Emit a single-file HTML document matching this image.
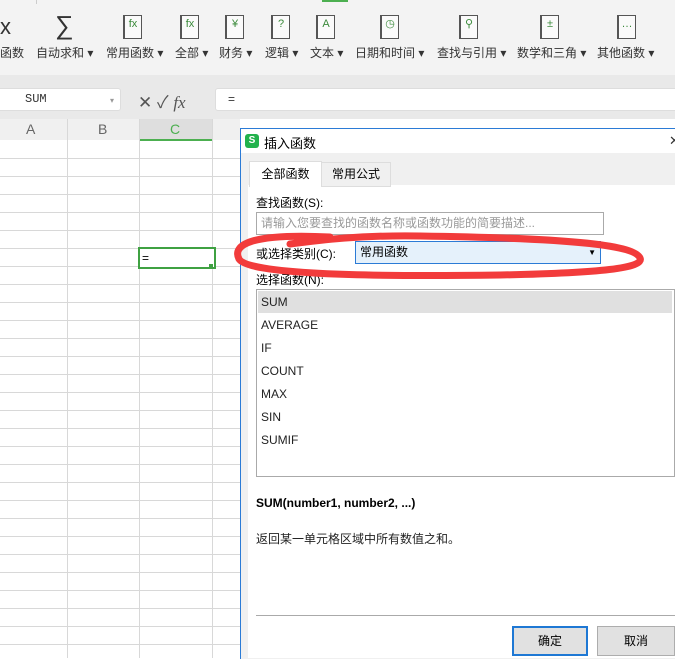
<html><head><style>
body{margin:0;width:675px;height:658px;overflow:hidden;background:#fff;font-family:"Liberation Sans","Noto Sans CJK SC",sans-serif;position:relative;font-size:12px;color:#333}
.a{position:absolute}
.lbl{position:absolute;top:44px;font-size:12px;color:#333;white-space:nowrap}
.ic{position:absolute;top:15px;width:16px;height:22px;border:1px solid #555;border-left:2px solid #555;font-size:11px;color:#3a8a3a;text-align:center;line-height:16px;background:#fafafa}
.hl{position:absolute;left:0;width:240px;height:1px;background:#d8d8d8}
.vl{position:absolute;top:119px;width:1px;height:539px;background:#d8d8d8}
.it{position:absolute;left:261px;font-size:12px;color:#222}
</style></head><body>
<div class="a" style="left:0;top:0;width:675px;height:75px;background:#f3f3f3"></div>
<div class="a" style="left:0;top:75px;width:675px;height:44px;background:#e9e9e9"></div>
<div class="a" style="left:322px;top:0;width:26px;height:2px;background:#4caf50"></div>
<div class="a" style="left:36px;top:0;width:1px;height:4px;background:#ccc"></div>
<div class="a" style="left:0;top:14px;font-size:22px;color:#333">x</div>
<div class="a" style="left:55px;top:10px;font-size:26px;color:#333">∑</div>
<div class="ic" style="left:123px">fx</div><div class="ic" style="left:180px">fx</div><div class="ic" style="left:225px">¥</div>
<div class="ic" style="left:271px">?</div><div class="ic" style="left:316px">A</div><div class="ic" style="left:380px">◷</div>
<div class="ic" style="left:459px">⚲</div><div class="ic" style="left:540px">±</div><div class="ic" style="left:617px">…</div>
<div class="lbl" style="left:0">函数</div><div class="lbl" style="left:36px">自动求和 ▾</div><div class="lbl" style="left:106px">常用函数 ▾</div>
<div class="lbl" style="left:175px">全部 ▾</div><div class="lbl" style="left:219px">财务 ▾</div><div class="lbl" style="left:265px">逻辑 ▾</div>
<div class="lbl" style="left:310px">文本 ▾</div><div class="lbl" style="left:355px">日期和时间 ▾</div><div class="lbl" style="left:437px">查找与引用 ▾</div>
<div class="lbl" style="left:517px">数学和三角 ▾</div><div class="lbl" style="left:597px">其他函数 ▾</div>
<div class="a" style="left:-4px;top:88px;width:95px;height:21px;background:#fff;border:1px solid #ddd;border-radius:3px;font-family:'Liberation Mono',monospace;padding-left:28px;line-height:21px">SUM</div>
<div class="a" style="left:110px;top:96px;font-size:8px;color:#999">▾</div>
<div class="a" style="left:138px;top:88px;font-size:17px;color:#555">✕ ✓ <i style="font-family:'Liberation Serif'">fx</i></div>
<div class="a" style="left:215px;top:88px;width:470px;height:21px;background:#fff;border:1px solid #ddd;border-radius:3px;line-height:21px;padding-left:12px">=</div>
<div class="a" style="left:0;top:119px;width:240px;height:21px;background:#f0f0f0"></div>
<div class="a" style="left:139px;top:119px;width:73px;height:20px;background:#dedede;border-bottom:2px solid #4caf50"></div>
<div class="a" style="left:26px;top:121px;font-size:14px;color:#666">A</div><div class="a" style="left:98px;top:121px;font-size:14px;color:#666">B</div><div class="a" style="left:170px;top:121px;font-size:14px;color:#4caf50">C</div>
<div class="vl" style="left:67px"></div><div class="vl" style="left:139px"></div><div class="vl" style="left:212px"></div>
<div class="hl" style="top:158px"></div><div class="hl" style="top:176px"></div><div class="hl" style="top:194px"></div><div class="hl" style="top:212px"></div><div class="hl" style="top:230px"></div><div class="hl" style="top:248px"></div><div class="hl" style="top:266px"></div><div class="hl" style="top:284px"></div><div class="hl" style="top:302px"></div><div class="hl" style="top:320px"></div><div class="hl" style="top:338px"></div><div class="hl" style="top:356px"></div><div class="hl" style="top:374px"></div><div class="hl" style="top:392px"></div><div class="hl" style="top:410px"></div><div class="hl" style="top:428px"></div><div class="hl" style="top:446px"></div><div class="hl" style="top:464px"></div><div class="hl" style="top:482px"></div><div class="hl" style="top:500px"></div><div class="hl" style="top:518px"></div><div class="hl" style="top:536px"></div><div class="hl" style="top:554px"></div><div class="hl" style="top:572px"></div><div class="hl" style="top:590px"></div><div class="hl" style="top:608px"></div><div class="hl" style="top:626px"></div><div class="hl" style="top:644px"></div>
<div class="a" style="left:138px;top:247px;width:72px;height:18px;border:2px solid #3fa142;background:#fff;line-height:18px;padding-left:2px;color:#000">=</div>
<div class="a" style="left:209px;top:264px;width:4px;height:4px;background:#3fa142"></div>
<div class="a" style="left:240px;top:128px;width:435px;height:530px;background:#f0f0f0;border-left:1px solid #2b7bd6;border-top:1px solid #2b7bd6"></div>
<div class="a" style="left:241px;top:129px;width:434px;height:24px;background:#fff"></div>
<div class="a" style="left:245px;top:134px;width:14px;height:14px;background:#22b24c;border-radius:3px;color:#fff;font-size:10px;text-align:center;line-height:14px;font-weight:bold">S</div>
<div class="a" style="left:264px;top:133px;font-size:13px;color:#000">插入函数</div>
<div class="a" style="left:669px;top:133px;font-size:13px">✕</div>
<div class="a" style="left:248px;top:185px;width:427px;height:473px;background:#fff"></div>
<div class="a" style="left:249px;top:161px;width:71px;height:25px;background:#fff;border:1px solid #ddd;border-bottom:none;text-align:center;line-height:25px;color:#000">全部函数</div>
<div class="a" style="left:321px;top:162px;width:68px;height:23px;background:#f0f0f0;border:1px solid #ddd;text-align:center;line-height:23px;color:#000">常用公式</div>
<div class="a" style="left:256px;top:194px;color:#000">查找函数(S):</div>
<div class="a" style="left:256px;top:212px;width:342px;height:21px;border:1px solid #aaa;color:#999;line-height:21px;padding-left:4px">请输入您要查找的函数名称或函数功能的简要描述...</div>
<div class="a" style="left:256px;top:245px;color:#000">或选择类别(C):</div>
<div class="a" style="left:355px;top:241px;width:240px;height:21px;border:1px solid #2b7bd6;background:#e5f1fb;line-height:21px;padding-left:4px;color:#000">常用函数<span style="position:absolute;right:4px;font-size:8px">▼</span></div>
<div class="a" style="left:256px;top:271px;color:#000">选择函数(N):</div>
<svg class="a" style="left:0;top:0" width="675" height="658"><path d="M330 237 C250 233,232 245,239 259 C248 274,360 277,500 275 C600 273,645 268,640 258 C634 244,560 238,420 236 C360 235,320 240,290 244" fill="none" stroke="#f23b3b" stroke-width="7" stroke-linecap="round"/></svg>
<div class="a" style="left:256px;top:289px;width:417px;height:186px;border:1px solid #aaa;background:#fff"></div>
<div class="a" style="left:258px;top:291px;width:414px;height:22px;background:#e0e0e0"></div>
<div class="it" style="top:295px">SUM</div><div class="it" style="top:318px">AVERAGE</div><div class="it" style="top:341px">IF</div><div class="it" style="top:364px">COUNT</div><div class="it" style="top:387px">MAX</div><div class="it" style="top:410px">SIN</div><div class="it" style="top:433px">SUMIF</div>
<div class="a" style="left:256px;top:496px;font-weight:bold;color:#000">SUM(number1, number2, ...)</div>
<div class="a" style="left:256px;top:530px;color:#222">返回某一单元格区域中所有数值之和。</div>
<div class="a" style="left:256px;top:615px;width:419px;height:1px;background:#aaa"></div>
<div class="a" style="left:512px;top:626px;width:72px;height:26px;border:2px solid #1e78d4;background:#e1e1e1;text-align:center;line-height:26px;color:#000">确定</div>
<div class="a" style="left:597px;top:626px;width:76px;height:28px;border:1px solid #adadad;background:#e1e1e1;text-align:center;line-height:28px;color:#000">取消</div>
</body></html>
